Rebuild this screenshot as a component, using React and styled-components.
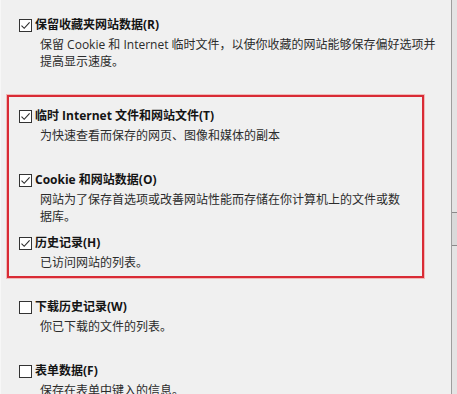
import styled, { createGlobalStyle } from "styled-components";

const GlobalStyle = createGlobalStyle`
  html, body {
    margin: 0;
    padding: 0;
    background: #f0f0f0;
  }
  body {
    font-family: "Open Sans", "Noto Sans CJK SC", sans-serif;
  }
`;

const options = [
  {
    title: "保留收藏夹网站数据(R)",
    lines: ["保留 Cookie 和 Internet 临时文件，以使你收藏的网站能够保存偏好选项并", "提高显示速度。"],
    checked: true,
  },
];

const highlighted = [
  {
    title: "临时 Internet 文件和网站文件(T)",
    lines: ["为快速查看而保存的网页、图像和媒体的副本"],
    checked: true,
  },
  {
    title: "Cookie 和网站数据(O)",
    lines: ["网站为了保存首选项或改善网站性能而存储在你计算机上的文件或数", "据库。"],
    checked: true,
    gap: 27,
  },
  {
    title: "历史记录(H)",
    lines: ["已访问网站的列表。"],
    checked: true,
    gap: 9,
  },
];

const rest = [
  {
    title: "下载历史记录(W)",
    lines: ["你已下载的文件的列表。"],
    checked: false,
    gap: 20,
  },
  {
    title: "表单数据(F)",
    lines: ["保存在表单中键入的信息。"],
    checked: false,
    gap: 27,
  },
];

function CheckBox({ checked }) {
  return (
    <Box>
      {checked && (
        <svg width="11" height="11" viewBox="0 0 11 11">
          <path d="M1.5 5.6 L4.2 8.3 L9.6 2.4" fill="none" stroke="#2a2a2a" strokeWidth="1.1" />
        </svg>
      )}
    </Box>
  );
}

function Option({ item }) {
  return (
    <OptionBlock $gap={item.gap || 0}>
      <TitleRow>
        <CheckBox checked={item.checked} />
        <Title>{item.title}</Title>
      </TitleRow>
      <Desc>
        {item.lines.map((l, i) => (
          <DescLine key={i}>{l}</DescLine>
        ))}
      </Desc>
    </OptionBlock>
  );
}

export default function App() {
  return (
    <Window>
      <GlobalStyle />
      <Panel>
        <Plain>
          {options.map((o) => (
            <Option key={o.title} item={o} />
          ))}
        </Plain>
        <Separator />
        <Highlight>
          {highlighted.map((o) => (
            <Option key={o.title} item={o} />
          ))}
        </Highlight>
        <Plain>
          {rest.map((o) => (
            <Option key={o.title} item={o} />
          ))}
        </Plain>
      </Panel>
      <ScrollTrack>
        <Thumb />
      </ScrollTrack>
    </Window>
  );
}

const Window = styled.div`
  display: flex;
  width: 457px;
  height: 394px;
  overflow: hidden;
  background: #f0f0f0;
`;

const Panel = styled.div`
  flex: 1;
  display: flex;
  flex-direction: column;
  padding-top: 16px;
  border-left: 1px solid #f7f7f7;
  box-sizing: border-box;
`;

const Plain = styled.div`
  padding-left: 18px;
`;

const Separator = styled.div`
  height: 1px;
  width: 406px;
  margin: 19px 0 0 23px;
  background: #b2b2b2;
`;

const Highlight = styled.div`
  margin: 6px 0 0 6px;
  width: 417px;
  box-sizing: border-box;
  padding: 10px 0 5px 10px;
  border: 2px solid #d92b35;
  box-shadow: 0 0 0 1px rgba(240, 140, 140, 0.55);
  & + div {
    margin-top: 20px;
  }
`;

const OptionBlock = styled.div`
  margin-top: ${({ $gap }) => $gap}px;
  &:first-child {
    margin-top: 0;
  }
`;

const TitleRow = styled.div`
  display: flex;
  align-items: center;
  height: 18px;
  gap: 3px;
`;

const Box = styled.div`
  width: 13px;
  height: 13px;
  box-sizing: border-box;
  border: 1px solid #333333;
  background: #ffffff;
  display: flex;
  align-items: center;
  justify-content: center;
  flex-shrink: 0;
`;

const Title = styled.span`
  font-size: 12px;
  font-weight: 700;
  color: #141414;
  line-height: 18px;
  white-space: nowrap;
`;

const Desc = styled.div`
  margin: 2px 0 0 21px;
`;

const DescLine = styled.div`
  font-size: 12px;
  line-height: 17px;
  color: #2b2b2b;
  white-space: nowrap;
`;

const ScrollTrack = styled.div`
  width: 5px;
  border-left: 1px solid #9e9e9e;
  background: #e4e4e4;
  display: flex;
  flex-direction: column;
`;

const Thumb = styled.div`
  margin-top: 212px;
  height: 32px;
  border-top: 1px solid #8a8a8a;
  border-bottom: 1px solid #8a8a8a;
  background: #dadada;
`;
